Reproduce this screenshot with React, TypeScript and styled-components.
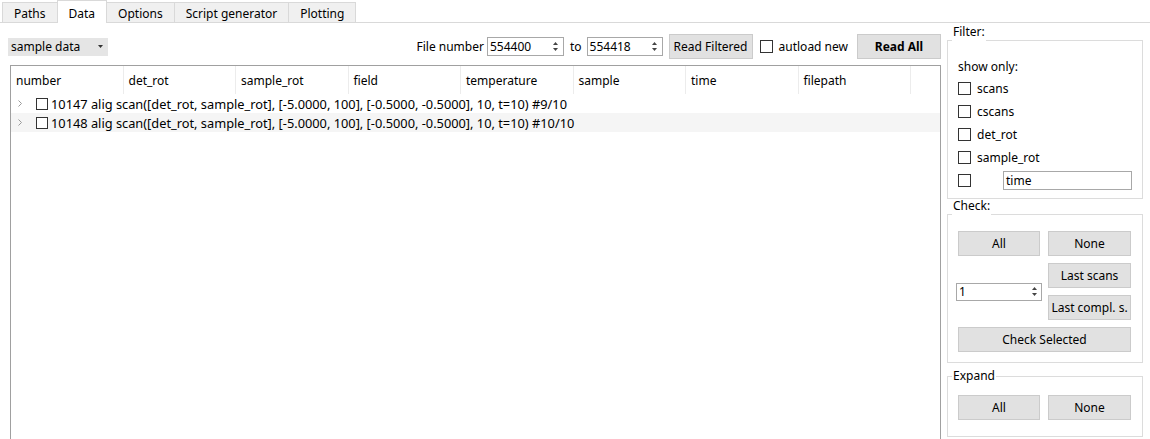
import React from "react";
import styled, { createGlobalStyle } from "styled-components";

const GlobalStyle = createGlobalStyle`
	html, body {
		margin: 0;
		padding: 0;
		background: #fff;
	}
	body {
		font-family: "Noto Sans", "Open Sans", sans-serif;
		font-size: 12px;
		color: #000;
	}
	* {
		box-sizing: border-box;
	}
`;

const Window = styled.div`
	width: 1150px;
	height: 439px;
	overflow: hidden;
	display: flex;
	flex-direction: column;
	background: #fff;
`;

const TabBar = styled.div`
	flex: none;
	display: flex;
	align-items: flex-end;
	height: 23px;
	padding-left: 3px;
	border-bottom: 1px solid #d9d9d9;
`;

const Tab = styled.div<{ $active?: boolean }>`
	position: relative;
	z-index: ${(p) => (p.$active ? 1 : 0)};
	display: flex;
	align-items: center;
	height: ${(p) => (p.$active ? 23 : 20)}px;
	margin-bottom: ${(p) => (p.$active ? -1 : 0)}px;
	margin-left: -1px;
	padding: ${(p) => (p.$active ? 3 : 1)}px 11px 0;
	border: 1px solid #d9d9d9;
	border-bottom: none;
	background: ${(p) => (p.$active ? "#fff" : "#f0f0f0")};
	white-space: nowrap;
`;

const Pane = styled.div`
	flex: 1;
	min-height: 0;
	display: flex;
	gap: 6px;
	padding: 0 7px 0 8px;
`;

const MainColumn = styled.div`
	flex: 0 0 933px;
	display: flex;
	flex-direction: column;
	padding-top: 11px;
	min-height: 0;
`;

const Toolbar = styled.div`
	flex: none;
	display: flex;
	align-items: center;
	height: 25px;
`;

const Combo = styled.div`
	display: flex;
	align-items: center;
	justify-content: space-between;
	width: 100px;
	height: 18px;
	padding: 0 5px 0 3px;
	background: #e5e5e5;
`;

const Spacer = styled.div`
	flex: 1;
`;

const Text = styled.span<{ $ml?: number }>`
	margin-left: ${(p) => p.$ml ?? 0}px;
	white-space: nowrap;
`;

const SpinWrap = styled.div<{ $w?: number; $h?: number; $ml?: number }>`
	display: flex;
	align-items: center;
	width: ${(p) => (p.$w ? `${p.$w}px` : "auto")};
	height: ${(p) => p.$h ?? 19}px;
	margin-left: ${(p) => p.$ml ?? 0}px;
	border: 1px solid #a8a8a8;
	background: #fff;
`;

const SpinValue = styled.span`
	flex: 1;
	padding-left: 2px;
	line-height: 1;
`;

const SpinArrows = styled.div`
	flex: none;
	display: flex;
	align-items: center;
	justify-content: center;
	width: 12px;
	height: 100%;
	margin-right: 1px;
`;

const Button = styled.div<{ $w?: number; $ml?: number; $bold?: boolean; $span?: boolean }>`
	display: flex;
	align-items: center;
	justify-content: center;
	width: ${(p) => (p.$w ? `${p.$w}px` : "auto")};
	height: 25px;
	margin-left: ${(p) => p.$ml ?? 0}px;
	grid-column: ${(p) => (p.$span ? "1 / span 2" : "auto")};
	border: 1px solid #cbcbcb;
	background: #e1e1e1;
	font-weight: ${(p) => (p.$bold ? 700 : 400)};
	white-space: nowrap;
`;

const Box = styled.span<{ $size?: number; $ml?: number }>`
	flex: none;
	display: inline-block;
	width: ${(p) => p.$size ?? 13}px;
	height: ${(p) => p.$size ?? 13}px;
	margin-left: ${(p) => p.$ml ?? 0}px;
	border: 1px solid #333;
	background: #fff;
`;

const Tree = styled.div`
	flex: 1;
	margin: 6px 0 0 2px;
	border: 1px solid #a0a0a0;
	background: #fff;
	min-height: 400px;
`;

const HeaderRow = styled.div`
	display: grid;
	grid-template-columns: repeat(8, 112.5px);
	height: 28px;
`;

const HeaderCell = styled.div`
	display: flex;
	align-items: center;
	padding-left: 5px;
	border-right: 1px solid #ececec;
`;

const TreeRow = styled.div<{ $alt?: boolean }>`
	display: flex;
	align-items: center;
	height: 19px;
	background: ${(p) => (p.$alt ? "#f5f5f5" : "#fff")};
	font-size: 12.8px;
	white-space: nowrap;
`;

const Expander = styled.span`
	flex: none;
	display: flex;
	align-items: center;
	justify-content: center;
	width: 8px;
	margin-left: 5px;
`;

const SideColumn = styled.div`
	flex: 0 0 196px;
	display: flex;
	flex-direction: column;
	padding-top: 2px;
`;

const GroupBox = styled.fieldset<{ $mt?: number }>`
	margin: ${(p) => p.$mt ?? 0}px 0 0;
	padding: 0;
	min-width: 0;
	border: 1px solid #dcdcdc;
`;

const GroupTitle = styled.legend<{ $raised?: boolean }>`
	margin-left: 4px;
	padding: 0 1px ${(p) => (p.$raised ? 16 : 0)}px;
	line-height: 14px;
	font-size: 12px;
`;

const GroupBody = styled.div<{ $pt: number; $pb: number }>`
	padding: ${(p) => p.$pt}px 10px ${(p) => p.$pb}px;
`;

const FilterRow = styled.div<{ $h?: number }>`
	display: flex;
	align-items: center;
	height: ${(p) => p.$h ?? 23}px;
`;

const LineEdit = styled.div`
	display: flex;
	align-items: center;
	width: 129px;
	height: 19px;
	margin: 0 -1px 0 32px;
	padding-left: 2px;
	border: 1px solid #a8a8a8;
	background: #fff;
`;

const ButtonGrid = styled.div`
	display: grid;
	grid-template-columns: 82px 83px;
	column-gap: 8px;
	row-gap: 7px;
`;

const GridSpin = styled.div`
	grid-row: span 2;
	align-self: center;
	margin: 0 -2px;
`;

const DownArrow = () => (
	<svg width="5" height="3" viewBox="0 0 5 3">
		<path d="M0 0h5L2.5 3z" fill="#333" />
	</svg>
);

const SpinIcon = () => (
	<svg width="5" height="11" viewBox="0 0 5 11">
		<path d="M0 4L2.5 1L5 4z" fill="#444" />
		<path d="M0 7h5L2.5 10z" fill="#444" />
	</svg>
);

const Chevron = () => (
	<svg width="4" height="7" viewBox="0 0 4 7">
		<path d="M0.5 0.5L3.5 3.5L0.5 6.5" fill="none" stroke="#9a9a9a" strokeWidth="1" />
	</svg>
);

interface SpinProps {
	value: string;
	w?: number;
	h?: number;
	ml?: number;
}

const SpinBox = ({ value, w, h, ml }: SpinProps): JSX.Element => (
	<SpinWrap $w={w} $h={h} $ml={ml}>
		<SpinValue>{value}</SpinValue>
		<SpinArrows>
			<SpinIcon />
		</SpinArrows>
	</SpinWrap>
);

const tabs = ["Paths", "Data", "Options", "Script generator", "Plotting"];
const columns = ["number", "det_rot", "sample_rot", "field", "temperature", "sample", "time", "filepath"];
const scans = [
	"10147 alig scan([det_rot, sample_rot], [-5.0000, 100], [-0.5000, -0.5000], 10, t=10) #9/10",
	"10148 alig scan([det_rot, sample_rot], [-5.0000, 100], [-0.5000, -0.5000], 10, t=10) #10/10",
];
const filters = ["scans", "cscans", "det_rot", "sample_rot"];

const App = (): JSX.Element => {
	return (
		<Window>
			<GlobalStyle />
			<TabBar>
				{tabs.map((tab) => (
					<Tab key={tab} $active={tab === "Data"}>
						{tab}
					</Tab>
				))}
			</TabBar>
			<Pane>
				<MainColumn>
					<Toolbar>
						<Combo>
							<span>sample data</span>
							<DownArrow />
						</Combo>
						<Spacer />
						<Text>File number</Text>
						<SpinBox value="554400" w={77} ml={3} />
						<Text $ml={6}>to</Text>
						<SpinBox value="554418" w={76} ml={5} />
						<Button $w={84} $ml={6}>
							Read Filtered
						</Button>
						<Box $ml={7} />
						<Text $ml={6}>autload new</Text>
						<Button $w={84} $ml={9} $bold>
							Read All
						</Button>
					</Toolbar>
					<Tree>
						<HeaderRow>
							{columns.map((col) => (
								<HeaderCell key={col}>{col}</HeaderCell>
							))}
						</HeaderRow>
						{scans.map((scan, i) => (
							<TreeRow key={scan} $alt={i % 2 === 1}>
								<Expander>
									<Chevron />
								</Expander>
								<Box $size={12} $ml={12} />
								<Text $ml={3}>{scan}</Text>
							</TreeRow>
						))}
					</Tree>
				</MainColumn>
				<SideColumn>
					<GroupBox>
						<GroupTitle $raised>Filter:</GroupTitle>
						<GroupBody $pt={0} $pb={6}>
							<FilterRow $h={22}>show only:</FilterRow>
							{filters.map((f) => (
								<FilterRow key={f}>
									<Box />
									<Text $ml={6}>{f}</Text>
								</FilterRow>
							))}
							<FilterRow>
								<Box />
								<LineEdit>time</LineEdit>
							</FilterRow>
						</GroupBody>
					</GroupBox>
					<GroupBox>
						<GroupTitle $raised>Check:</GroupTitle>
						<GroupBody $pt={2} $pb={10}>
							<ButtonGrid>
								<Button>All</Button>
								<Button>None</Button>
								<GridSpin>
									<SpinBox value="1" h={18} />
								</GridSpin>
								<Button>Last scans</Button>
								<Button>Last compl. s.</Button>
								<Button $span>Check Selected</Button>
							</ButtonGrid>
						</GroupBody>
					</GroupBox>
					<GroupBox $mt={6}>
						<GroupTitle>Expand</GroupTitle>
						<GroupBody $pt={12} $pb={16}>
							<ButtonGrid>
								<Button>All</Button>
								<Button>None</Button>
							</ButtonGrid>
						</GroupBody>
					</GroupBox>
				</SideColumn>
			</Pane>
		</Window>
	);
};

export default App;
